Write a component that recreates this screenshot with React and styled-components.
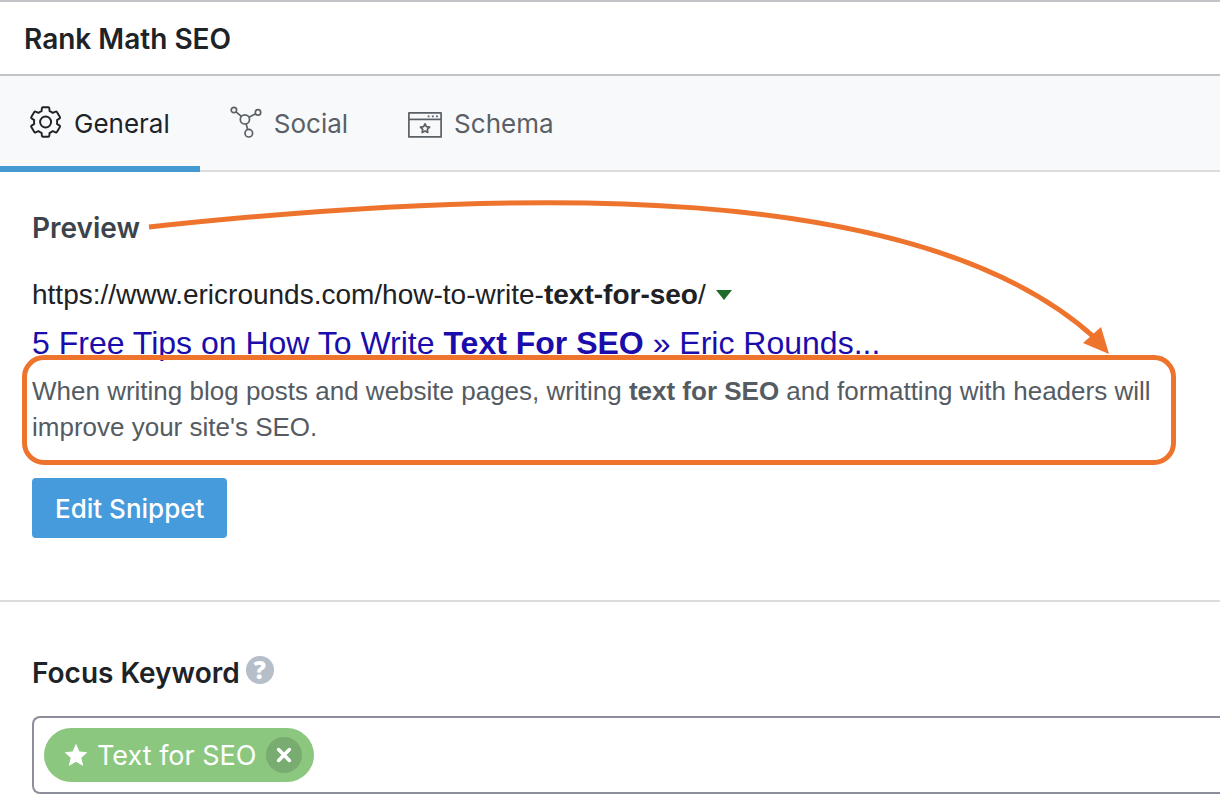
import { useState } from "react";
import styled, { createGlobalStyle, css } from "styled-components";

const GlobalStyle = createGlobalStyle`
  *{
    box-sizing:border-box;
  }
  body{
    margin:0;
    background:#fff;
    color:#1d2327;
    font-family:Inter, Roboto, "Liberation Sans", sans-serif;
    font-size:26px;
    overflow-x:hidden;
  }
  button{
    font-family:inherit;
    cursor:pointer;
  }
`;

const GearIcon = () => (
  <svg width="32" height="32" viewBox="0 0 32 32" fill="none" stroke="currentColor" strokeWidth="1.9" strokeLinejoin="round" aria-hidden="true">
    <path d="M12.9 1.2H18.3Q19.2 1.2 19.3 2.1L19.6 5.1C20.8 5.5 21.8 6.1 22.8 6.9L25.6 5.6Q26.4 5.2 26.9 6L29.9 11.1Q30.3 11.9 29.6 12.4L27 14.1C27.2 15.4 27.2 16.6 27 17.9L29.6 19.6Q30.3 20.1 29.9 20.9L26.9 26Q26.4 26.8 25.6 26.4L22.8 25.1C21.8 25.9 20.8 26.5 19.6 26.9L19.3 29.9Q19.2 30.8 18.3 30.8H12.9Q12 30.8 11.9 29.9L11.6 26.9C10.4 26.5 9.4 25.9 8.4 25.1L5.6 26.4Q4.8 26.8 4.3 26L1.3 20.9Q0.9 20.1 1.6 19.6L4.2 17.9C4 16.6 4 15.4 4.2 14.1L1.6 12.4Q0.9 11.9 1.3 11.1L4.3 6Q4.8 5.2 5.6 5.6L8.4 6.9C9.4 6.1 10.4 5.5 11.6 5.1L11.9 2.1Q12 1.2 12.9 1.2Z" />
    <circle cx="15.6" cy="16" r="5.5" />
  </svg>
);

const SocialIcon = () => (
  <svg width="32" height="32" viewBox="0 0 32 32" fill="none" stroke="currentColor" strokeWidth="1.7" aria-hidden="true">
    <circle cx="3.9" cy="4" r="2.7" />
    <circle cx="28" cy="6.4" r="2.7" />
    <circle cx="14.9" cy="13.4" r="4.6" />
    <circle cx="18.8" cy="27.2" r="3.8" />
    <path d="M6 5.8L11.4 10.3M25.6 7.8L19 11.2M16.1 17.9L17.7 23.5" />
  </svg>
);

const SchemaIcon = () => (
  <svg width="34" height="32" viewBox="0 0 34 32" fill="none" stroke="currentColor" strokeWidth="1.7" strokeLinejoin="round" aria-hidden="true">
    <rect x="0.9" y="6.9" width="32.2" height="24" />
    <path d="M1 13.4H33" />
    <path d="M19.7 10.3H21.5M23.9 10.3H25.7M28.1 10.3H29.9" strokeWidth="1.8" />
    <path d="M17 17.8L18.4 20.7L21.6 21.1L19.3 23.3L19.8 26.5L17 25L14.2 26.5L14.7 23.3L12.4 21.1L15.6 20.7Z" />
  </svg>
);

const tabs = [
  { id: "general", label: "General", icon: <GearIcon /> },
  { id: "social", label: "Social", icon: <SocialIcon /> },
  { id: "schema", label: "Schema", icon: <SchemaIcon /> },
];

export default function App() {
  const [active, setActive] = useState("general");
  const [keywords, setKeywords] = useState(["Text for SEO"]);

  const removeKeyword = (keyword) => {
    setKeywords(keywords.filter((k) => k !== keyword));
  };

  return (
    <>
      <GlobalStyle />
      <Header>
        <PanelTitle>Rank Math SEO</PanelTitle>
      </Header>
      <TabBar role="tablist">
        {tabs.map((tab) => (
          <Tab key={tab.id} type="button" role="tab" aria-selected={active === tab.id} $active={active === tab.id} onClick={() => setActive(tab.id)}>
            {tab.icon}
            {tab.label}
          </Tab>
        ))}
      </TabBar>
      <PreviewSection>
        <PreviewTitle>Preview</PreviewTitle>
        <Url>
          <span>
            https://www.ericrounds.com/how-to-write-<b>text-for-seo</b>/
          </span>
          <Caret viewBox="0 0 16 10" aria-hidden="true">
            <path d="M0 0H16L8 10Z" fill="#1e6b2a" />
          </Caret>
        </Url>
        <ResultTitle href="#">
          5 Free Tips on How To Write <b>Text For SEO</b> » Eric Rounds...
        </ResultTitle>
        <Description>
          When writing blog posts and website pages, writing <b>text for SEO</b> and formatting with headers will improve your site's SEO.
        </Description>
        <EditButton type="button">Edit Snippet</EditButton>
        <Arrow viewBox="0 0 1220 200" aria-hidden="true">
          <path d="M149 55C520 15 920 7 1095 166" fill="none" stroke="#ee742d" strokeWidth="5" />
          <path d="M1109 182L1083 171L1101 155Z" fill="#ee742d" />
        </Arrow>
      </PreviewSection>
      <KeywordSection>
        <KeywordHead>
          <PanelTitle>Focus Keyword</PanelTitle>
          <Help type="button" aria-label="Help">?</Help>
        </KeywordHead>
        <KeywordField>
          {keywords.map((keyword) => (
            <Chip key={keyword}>
              <svg width="24" height="24" viewBox="0 0 24 24" fill="#fff" aria-hidden="true">
                <path d="M12 0.8L15.4 8.4L23.4 9.2L17.4 14.8L19.2 23L12 18.8L4.8 23L6.6 14.8L0.6 9.2L8.6 8.4Z" />
              </svg>
              {keyword}
              <Remove type="button" aria-label={`Remove ${keyword}`} onClick={() => removeKeyword(keyword)}>
                <svg width="16" height="16" viewBox="0 0 16 16" stroke="#fff" strokeWidth="3.6" strokeLinecap="round" aria-hidden="true">
                  <path d="M2.6 2.6L13.4 13.4M13.4 2.6L2.6 13.4" />
                </svg>
              </Remove>
            </Chip>
          ))}
          <KeywordInput type="text" aria-label="Focus Keyword" />
        </KeywordField>
      </KeywordSection>
    </>
  );
}

const Header = styled.header`
  padding:19px 24px 17px;
  border-top:2px solid #c3c4c7;
  border-bottom:2px solid #c3c4c7;
`;

const PanelTitle = styled.h2`
  margin:0;
  font-size:28px;
  font-weight:600;
  line-height:36px;
`;

const TabBar = styled.div`
  display:flex;
  background:#f8f9fb;
  box-shadow:inset 0 -2px #dcdcde;
`;

const Tab = styled.button`
  display:flex;
  align-items:center;
  gap:12px;
  height:96px;
  padding:6px 30px 0;
  border:0;
  border-bottom:6px solid transparent;
  background:none;
  color:#5a6065;
  font-size:26px;
  line-height:32px;
  svg{
    margin-bottom:4px;
  }
  ${(props) => props.$active && css`
    color:#1d2327;
    border-bottom-color:#459bd1;
  `}
`;

const PreviewSection = styled.section`
  position:relative;
  padding:38px 54px 62px 32px;
  border-bottom:2px solid #dcdcde;
  font-family:"Liberation Sans", Arial, sans-serif;
`;

const PreviewTitle = styled.h3`
  margin:0;
  color:#3c434a;
  font-family:Inter, Roboto, sans-serif;
  font-size:28px;
  font-weight:600;
  line-height:36px;
`;

const Url = styled.div`
  display:flex;
  align-items:center;
  gap:10px;
  margin-top:32px;
  color:#202124;
  font-size:28px;
  line-height:34px;
`;

const Caret = styled.svg`
  width:16px;
  height:10px;
`;

const ResultTitle = styled.a`
  display:block;
  margin-top:10px;
  color:#1a0dab;
  font-size:32px;
  line-height:42px;
  text-decoration:none;
`;

const Description = styled.p`
  position:relative;
  margin:9px 0 0;
  color:#545b62;
  font-size:26px;
  line-height:36px;
  &::after{
    content:"";
    position:absolute;
    inset:-18px -10px -20px;
    border:5px solid #ee742d;
    border-radius:22px;
    pointer-events:none;
  }
`;

const EditButton = styled.button`
  display:block;
  height:60px;
  margin-top:33px;
  padding:0 23px;
  border:0;
  border-radius:4px;
  background:#469bdd;
  color:#fff;
  font-family:Inter, Roboto, sans-serif;
  font-size:26px;
  font-weight:500;
`;

const Arrow = styled.svg`
  position:absolute;
  top:0;
  left:0;
  width:1220px;
  height:200px;
  pointer-events:none;
`;

const KeywordSection = styled.section`
  padding:53px 0 10px 32px;
`;

const KeywordHead = styled.div`
  display:flex;
  align-items:center;
  gap:6px;
`;

const Help = styled.button`
  width:28px;
  height:28px;
  margin-bottom:6px;
  padding:0;
  border:0;
  border-radius:50%;
  background:#b6bec9;
  color:#fff;
  font-family:"Open Sans", sans-serif;
  font-size:24px;
  font-weight:800;
  line-height:28px;
`;

const KeywordField = styled.div`
  display:flex;
  align-items:center;
  margin-top:25px;
  padding:10px;
  border:2px solid #8c8f9b;
  border-right:0;
  border-radius:8px 0 0 8px;
`;

const Chip = styled.span`
  display:flex;
  align-items:center;
  gap:9px;
  height:54px;
  padding:0 12px 0 20px;
  border-radius:27px;
  background:#8cc780;
  color:#fff;
  font-size:27px;
  white-space:nowrap;
`;

const Remove = styled.button`
  display:flex;
  align-items:center;
  justify-content:center;
  width:36px;
  height:36px;
  padding:0;
  border:0;
  border-radius:50%;
  background:#79ac70;
`;

const KeywordInput = styled.input`
  flex:1;
  min-width:0;
  height:54px;
  padding:0 10px;
  border:0;
  outline:0;
  background:transparent;
  font:inherit;
`;
